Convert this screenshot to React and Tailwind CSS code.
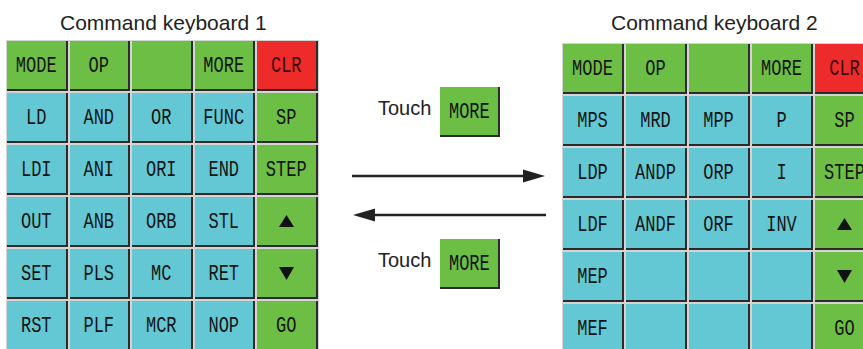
import React from 'react';

const COLORS = {
  g: 'bg-[#6dbe45]',
  c: 'bg-[#63c8d4]',
  r: 'bg-[#ee2b2b]',
};

const KB1 = [
  [['MODE', 'g'], ['OP', 'g'], ['', 'g'], ['MORE', 'g'], ['CLR', 'r']],
  [['LD', 'c'], ['AND', 'c'], ['OR', 'c'], ['FUNC', 'c'], ['SP', 'g']],
  [['LDI', 'c'], ['ANI', 'c'], ['ORI', 'c'], ['END', 'c'], ['STEP', 'g']],
  [['OUT', 'c'], ['ANB', 'c'], ['ORB', 'c'], ['STL', 'c'], ['up', 'g']],
  [['SET', 'c'], ['PLS', 'c'], ['MC', 'c'], ['RET', 'c'], ['down', 'g']],
  [['RST', 'c'], ['PLF', 'c'], ['MCR', 'c'], ['NOP', 'c'], ['GO', 'g']],
];

const KB2 = [
  [['MODE', 'g'], ['OP', 'g'], ['', 'g'], ['MORE', 'g'], ['CLR', 'r']],
  [['MPS', 'c'], ['MRD', 'c'], ['MPP', 'c'], ['P', 'c'], ['SP', 'g']],
  [['LDP', 'c'], ['ANDP', 'c'], ['ORP', 'c'], ['I', 'c'], ['STEP', 'g']],
  [['LDF', 'c'], ['ANDF', 'c'], ['ORF', 'c'], ['INV', 'c'], ['up', 'g']],
  [['MEP', 'c'], ['', 'c'], ['', 'c'], ['', 'c'], ['down', 'g']],
  [['MEF', 'c'], ['', 'c'], ['', 'c'], ['', 'c'], ['GO', 'g']],
];

function Label({ text, red }) {
  if (text === 'up') {
    return (
      <svg width="15" height="12" viewBox="0 0 15 12">
        <polygon points="7.5,0 15,12 0,12" fill="#111" />
      </svg>
    );
  }
  if (text === 'down') {
    return (
      <svg width="15" height="13" viewBox="0 0 15 13">
        <polygon points="0,0 15,0 7.5,13" fill="#111" />
      </svg>
    );
  }
  return (
    <span
      className={`inline-block scale-y-[1.35] font-['Liberation_Mono',monospace] text-[17px] leading-none ${
        red ? 'text-[#3a0808]' : 'text-[#141414]'
      }`}
    >
      {text}
    </span>
  );
}

function Key({ text, color }) {
  return (
    <div
      className={`flex items-center justify-center border-r-2 border-b-2 border-[#2b2b2b] ${COLORS[color]}`}
    >
      <Label text={text} red={color === 'r'} />
    </div>
  );
}

function Keyboard({ title, rows, cols, titleClass, gridClass }) {
  return (
    <div className="shrink-0 flex flex-col">
      <div className={`h-[24px] leading-[24px] text-[21px] text-[#222] whitespace-nowrap ${titleClass}`}>
        {title}
      </div>
      <div className={`grid gap-[2px] p-[1px] bg-[#d4d4d4] grid-rows-[repeat(6,50px)] ${cols} ${gridClass}`}>
        {rows.flat().map(([t, c], i) => (
          <Key key={i} text={t} color={c} />
        ))}
      </div>
    </div>
  );
}

function TouchMore() {
  return (
    <div className="flex items-start h-[50px] ml-[59.5px]">
      <span className="mt-[10px] leading-[23px] text-[20px] text-[#222]">Touch</span>
      <div className="ml-[9px] w-[60px] h-[50px] flex items-center justify-center bg-[#6dbe45] border-r-2 border-b-2 border-[#2b2b2b]">
        <Label text="MORE" />
      </div>
    </div>
  );
}

export default function App() {
  return (
    <div className="w-[863px] h-[349px] overflow-hidden bg-white flex font-['Liberation_Sans',Arial,sans-serif]">
      <div className="shrink-0 ml-[6px]">
        <Keyboard
          title="Command keyboard 1"
          rows={KB1}
          cols="grid-cols-[repeat(5,60.5px)]"
          titleClass="mt-[11px] ml-[54px]"
          gridClass="mt-[5px]"
        />
      </div>

      <div className="shrink-0 w-[243.5px] flex flex-col">
        <div className="mt-[87px]">
          <TouchMore />
        </div>
        <svg className="mt-[23px] ml-[31.5px]" width="200" height="70" viewBox="0 0 200 70">
          <line x1="2" y1="16" x2="180" y2="16" stroke="#222" strokeWidth="2.6" />
          <polygon points="173,9.5 195,16 173,22.5" fill="#222" />
          <line x1="20" y1="55" x2="196" y2="55" stroke="#222" strokeWidth="2.6" />
          <polygon points="3,55 25,48.5 25,61.5" fill="#222" />
        </svg>
        <div className="mt-[9px]">
          <TouchMore />
        </div>
      </div>

      <div className="shrink-0">
        <Keyboard
          title="Command keyboard 2"
          rows={KB2}
          cols="grid-cols-[repeat(5,61px)]"
          titleClass="mt-[11px] ml-[49px]"
          gridClass="mt-[8px]"
        />
      </div>
    </div>
  );
}
